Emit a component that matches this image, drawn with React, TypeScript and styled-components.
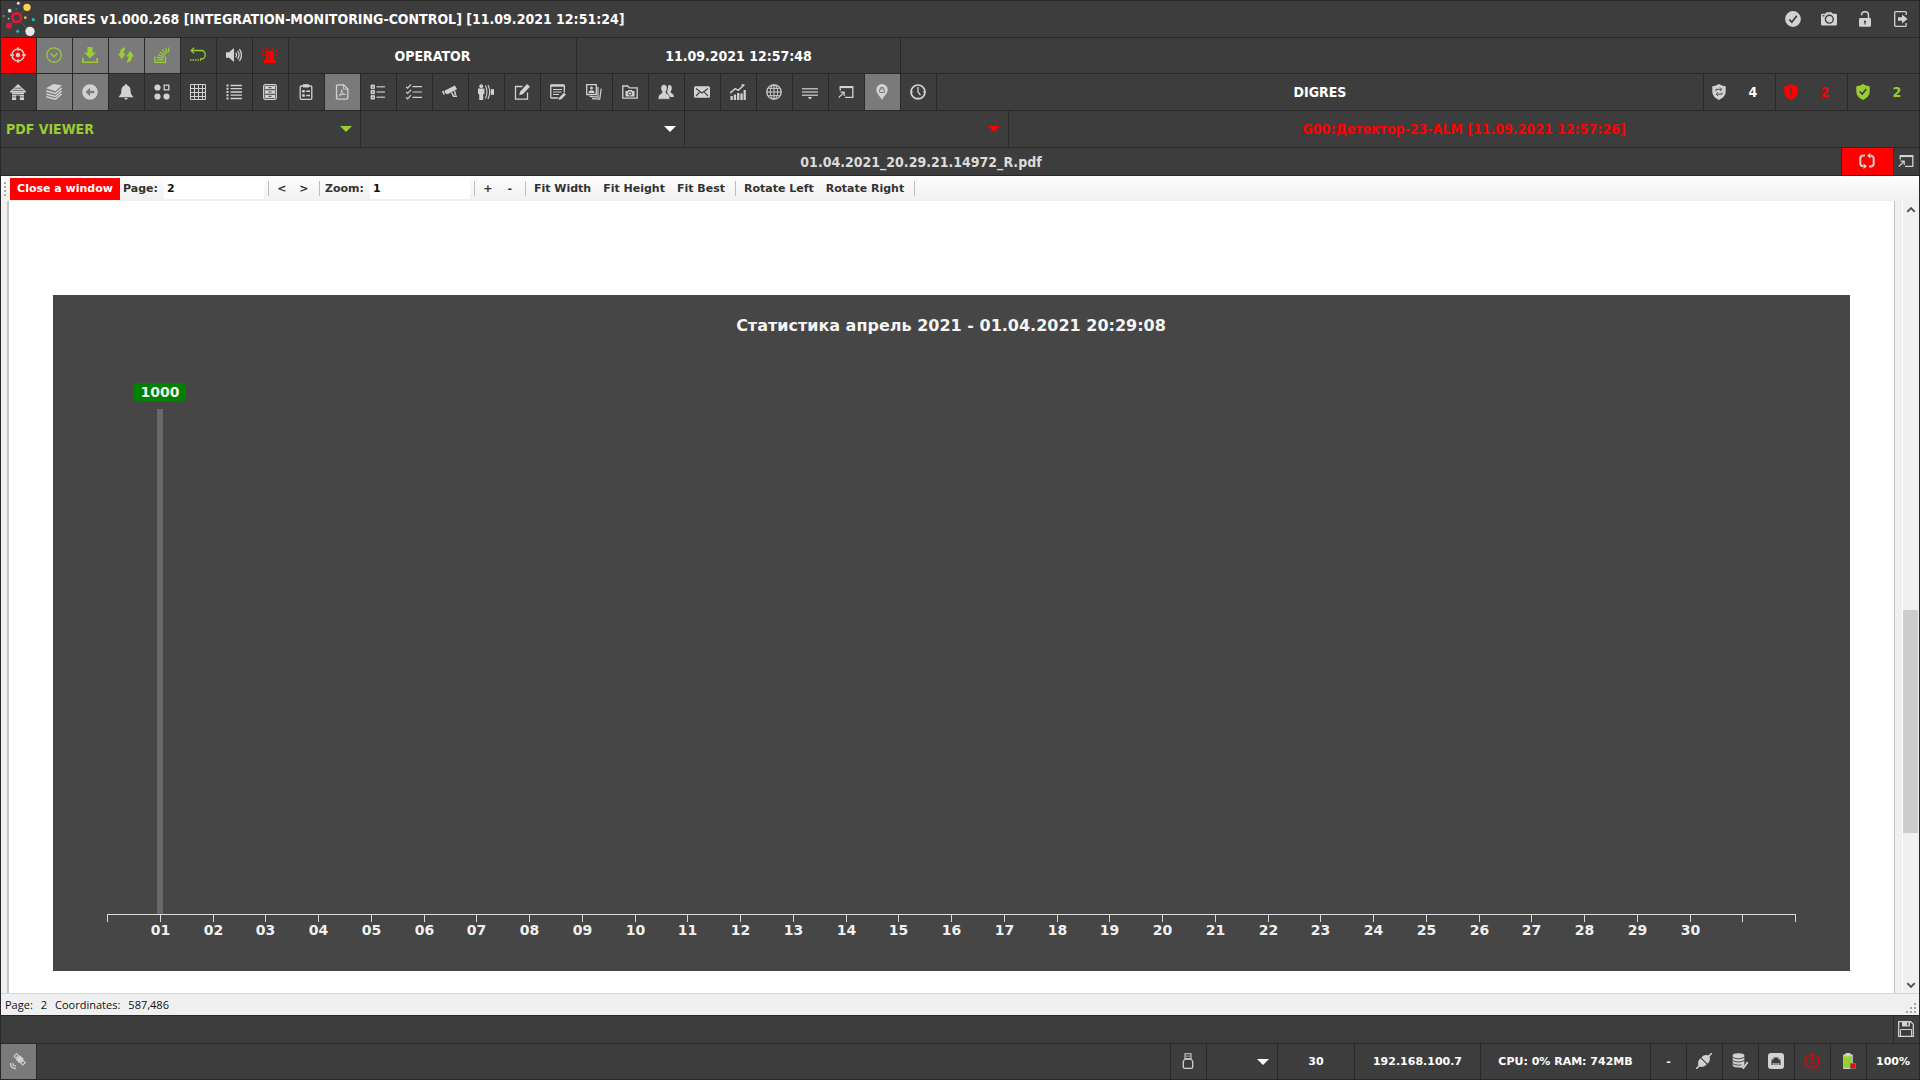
import React from "react";
import styled, { createGlobalStyle } from "styled-components";

const c = {
  panel: "#3d3d3d",
  line: "#282828",
  active: "#7a7a7a",
  icon: "#d2d2d2",
  green: "#9acd32",
  red: "#ff0000",
  light: "#f0f0f0",
};

const Global = createGlobalStyle`
  *, *::before, *::after { box-sizing: border-box; }
  body { margin: 0; background: ${c.line}; overflow: hidden; }
  button, input, select { font: inherit; color: inherit; border: 0; padding: 0; margin: 0; background: none; border-radius: 0; }
`;

const Shell = styled.div`
  display: flex;
  flex-direction: column;
  gap: 1px;
  min-height: 100vh;
  padding: 1px;
  background: ${c.line};
  color: #fff;
  font: bold 14px "DejaVu Sans Condensed", "DejaVu Sans", sans-serif;
`;

const TitleBar = styled.header`
  display: flex;
  align-items: center;
  height: 36px;
  flex: none;
  background: ${c.panel};
`;

const AppTitle = styled.h1`
  flex: 1;
  margin: 0 0 0 6px;
  font: inherit;
`;

const IconButton = styled.button<{ $bg?: string; $tone?: string; $w?: number }>`
  display: flex;
  align-items: center;
  justify-content: center;
  flex: none;
  width: ${(p) => p.$w ?? 35}px;
  padding-right: 1px;
  align-self: stretch;
  background: ${(p) => p.$bg ?? c.panel};
  color: ${(p) => p.$tone ?? c.icon};
`;

const Row = styled.div<{ $h: number }>`
  display: flex;
  gap: 1px;
  height: ${(p) => p.$h}px;
  flex: none;
  ${IconButton} {
    padding-bottom: ${(p) => p.$h % 2}px;
  }
`;

const BottomBar = styled(Row)`
  font: bold 11px "DejaVu Sans", sans-serif;
`;

const Cell = styled.div<{ $w?: number; $tone?: string }>`
  display: flex;
  align-items: center;
  justify-content: center;
  ${(p) => (p.$w ? `width: ${p.$w}px; flex: none;` : "flex: 1;")}
  background: ${c.panel};
  color: ${(p) => p.$tone ?? "#fff"};
  white-space: nowrap;
`;

const Counter = styled.div<{ $tone?: string }>`
  display: flex;
  align-items: center;
  gap: 4px;
  flex: none;
  width: 71px;
  padding-left: 7px;
  background: ${c.panel};
  color: ${(p) => p.$tone ?? "#fff"};
`;

const CounterValue = styled.span`
  flex: 1;
  text-align: center;
`;

const PickerBox = styled.div<{ $w: number; $tone: string }>`
  position: relative;
  flex: none;
  width: ${(p) => p.$w}px;
  background: ${c.panel};
  color: ${(p) => p.$tone};
  &::after {
    content: "";
    position: absolute;
    right: 8px;
    top: 50%;
    margin-top: -3px;
    border: 6px solid transparent;
    border-top-color: currentColor;
    border-bottom: 0;
    pointer-events: none;
  }
`;

const PickerSelect = styled.select`
  appearance: none;
  width: 100%;
  height: 100%;
  padding-left: 5px;
  option { color: #000; }
`;

const Viewer = styled.main`
  display: flex;
  flex-direction: column;
  flex: 1;
  min-height: 0;
  background: ${c.light};
  color: #333;
`;

const Toolbar = styled.div`
  display: flex;
  align-items: center;
  height: 25px;
  flex: none;
  padding-left: 3px;
  background: linear-gradient(#fefefe, ${c.light});
  font: bold 11px "DejaVu Sans", sans-serif;
`;

const Grip = styled.span`
  width: 2px;
  height: 14px;
  margin-right: 4px;
  background: repeating-linear-gradient(#aaa 0 2px, transparent 2px 4px);
`;

const CloseButton = styled.button`
  width: 110px;
  height: 22px;
  background: ${c.red};
  color: #fff;
`;

const FieldLabel = styled.label`
  margin: 0 6px 0 3px;
`;

const Field = styled.input`
  width: 100px;
  height: 20px;
  padding: 0 3px;
  background: #fff;
  color: #111;
`;

const ToolButton = styled.button<{ $w?: number }>`
  ${(p) => (p.$w ? `width: ${p.$w}px;` : "padding: 0 6px;")}
  height: 22px;
  white-space: nowrap;
`;

const Divider = styled.span`
  width: 1px;
  height: 15px;
  margin: 0 2px 0 4px;
  background: #bdbdbd;
`;

const Viewport = styled.div`
  display: flex;
  flex: 1;
  min-height: 0;
  overflow: hidden;
`;

const PageArea = styled.section`
  flex: 1;
  min-width: 0;
  margin: 0 8px 0 6px;
  padding: 94px 44px 22px;
  border: solid #c4c4c4;
  border-width: 0 1px 0 2px;
  background: #fff;
`;

const Chart = styled.svg`
  display: block;
  width: 100%;
  height: auto;
  background: #464646;
  font: bold 14px "DejaVu Sans", sans-serif;
`;

const ScrollRail = styled.div`
  display: flex;
  flex-direction: column;
  width: 17px;
  margin-left: -1px;
  flex: none;
  border-left: 1px solid #fff;
`;

const ScrollButton = styled.button`
  display: flex;
  align-items: center;
  justify-content: center;
  height: 17px;
  flex: none;
  padding-right: 1px;
  color: #505050;
`;

const ScrollTrack = styled.div`
  display: flex;
  flex-direction: column;
  flex: 1;
  padding-right: 1px;
`;

const ScrollSpace = styled.span<{ $grow: number }>`
  flex: ${(p) => p.$grow} 0 0;
`;

const ScrollThumb = styled.span`
  flex: 223 0 0;
  background: #cdcdcd;
`;

const StatusLine = styled.div`
  display: flex;
  align-items: center;
  gap: 8px;
  height: 22px;
  flex: none;
  padding-left: 4px;
  border-top: 1px solid #d7d7d7;
  color: #111;
  font: 11px "Open Sans", sans-serif;
`;

const SizeGrip = styled.span`
  display: flex;
  margin: 6px 3px 0 auto;
`;

type Glyph = React.ReactNode;

const Icon = ({ size = 16, children }: { size?: number; children: Glyph }) => (
  <svg width={size} height={size} viewBox="0 0 16 16" fill="none" stroke="currentColor" strokeWidth="1.3" aria-hidden="true">
    {children}
  </svg>
);

const F = { fill: "currentColor", stroke: "none" };
const cut = { fill: "none", stroke: c.panel };
const cutFill = { fill: c.panel, stroke: "none" };

const shield = "M8 0C9.800 1.300 12 2 14.700 2.300V7.500c0 4-3.200 7-6.700 8.500C4.500 14.500 1.300 11.500 1.300 7.500V2.300C4 2 6.200 1.300 8 0z";

const g: Record<string, Glyph> = {
  target: <><circle cx="8" cy="8" r="6" strokeWidth="1.5" /><circle cx="8" cy="8" r="2.200" {...F} /><path d="M8 0v4M8 12v4M0 8h4M12 8h4" /></>,
  chevron: <><circle cx="8" cy="8" r="7.200" /><path d="M4.500 6.300 8 9.800l3.500-3.500" /></>,
  download: <><path d="M5.500 0h5v5.500H14L8 11.500 2 5.500h3.500z" {...F} /><path d="M.8 11v4.200h14.400V11" strokeWidth="1.600" /></>,
  bolts: <><path d="M7.500 0 3 2.200 1.800 6.500H0l3.700 5.700L7.800 6.500H5.300z" {...F} /><path d="M8.500 16l4.500-2.200 1.200-4.300H16l-3.700-5.700-4.100 5.700h2.500z" {...F} /></>,
  stack: <><path d="M1 9.500v5.800h10.500V9.500" /><path d="M3 12.900h6.500M3.100 10.300l6.400.9M4 7.600l6 2.200M5.800 4.900l5 3.600M8.400 2.700l3.500 4.600M11.600 1.200l1.400 5M15 .5l-.7 5" strokeWidth="1.200" /></>,
  back: <><path d="M1 3.500h10.500a3.700 4.200 0 0 1 0 8.500H10" /><path d="M4.200.6 1.200 3.500l3 2.900" /><path d="M0 13h11" strokeDasharray="1.500 1" strokeWidth="1.400" /></>,
  sound: <><path d="M0 5.300h3L8 1v14L3 10.700H0z" {...F} /><path d="M9.700 5.700q1.600 2.300 0 4.600M11.600 3.900q3 4.100 0 8.200M13.400 2.200q4.200 5.800 0 11.600" /></>,
  siren: <><path d="M4 13V6q0-2.500 2.500-2.500h3Q12 3.500 12 6v7h2v3H2v-3z" {...F} /><path d="M6.300 12V7.500q0-1.500 1-1.800" stroke={c.panel} strokeWidth=".8" /><path d="M5.200 2.300 4.300.2M10.800 2.300 11.700.2M2.700 4.500.8 3M13.300 4.500l2-1.500M2.500 7.500H0M13.500 7.500H16" /></>,
  home: <><path d="M8 0 0 7.500v1h16v-1z" {...F} /><path d="M2 8.500h12V16H9.800v-4.500H6.200V16H2z" {...F} /><path d="M4.500 4.200h7M2.500 6.400h11M2 10.600h12M2 13h12" stroke={c.panel} strokeWidth=".7" /></>,
  layers: <><path d="M0 4.300 7.500 0 16 1.300 9.500 7.300z" {...F} /><path d="M.3 7 9.500 9.500 15.700 4M.3 10 9.500 12.500 15.700 7M.3 12.800 9.500 15.200 15.700 9.800" strokeWidth="1.500" /></>,
  prev: <><circle cx="8" cy="8" r="7.800" {...F} /><path d="M12.300 6.700H8V3.800L3.500 8 8 12.200V9.300h4.300z" fill={c.active} stroke="none" /></>,
  bell: <><path d="M8 0q1.300 0 1.300 1.500C12.500 2.400 12.500 5 12.700 8c.2 2 1.300 3.300 2.800 5.200H.5C2 11.300 3.100 10 3.300 8c.2-3 .2-5.600 3.400-6.500Q6.700 0 8 0z" {...F} /><path d="M6 14h4q-2 3.500-4 0z" {...F} /></>,
  shapes: <><circle cx="3.500" cy="3.500" r="3.100" {...F} /><circle cx="3.500" cy="12.500" r="3.100" {...F} /><circle cx="12.500" cy="12.500" r="3.100" {...F} /><path d="M10.200 1.200h4.600v4.600h-4.600z" /></>,
  grid: <path d="M.5.5h15v15H.5zM4.500.5v15M8.500.5v15M12.500.5v15M.5 4.500h15M.5 8.500h15M.5 12.500h15" strokeWidth="1" />,
  list: <><path d="M4.500 1.500H16M4.500 4.700H16M4.500 8H16M4.500 11.200H16M4.500 14.500H16" /><path d="M.5 1.500h2M.5 4.700h2M.5 8h2M.5 11.200h2M.5 14.500h2" strokeWidth="2" /></>,
  cabinet: <><rect x="1.700" y=".7" width="12.600" height="14.600" rx="1.500" /><path d="M3 2h10v3.300H3zM3 6.300h10v3.400H3zM3 10.700h10V14H3z" {...F} /><path d="M6.500 3.700h3M6.500 8h3M6.500 12.300h3" {...cut} strokeWidth="1" /></>,
  clipboard: <><rect x="2.200" y="2" width="11.600" height="13.300" rx="1" /><path d="M5 .2h6v3.300H5z" {...F} /><path d="M4.200 6h2.600v2.600H4.200zM4.200 10.200h2.600v2.600H4.200zM8.200 6.500H12v1.400H8.200zM8.200 10.800H12v1.400H8.200z" {...F} /></>,
  pdf: <><path d="M2.500 2.200Q2.500.8 4 .8h5.500l4.300 4.300v8.700q0 1.400-1.500 1.400H4q-1.500 0-1.500-1.400z" /><path d="M9.500.8v4.300h4.300" strokeWidth=".9" /><path d="M7.700 5.500c.6 2-1 5-3.200 7M7.700 6.500c.3 2.500 2 4 4 4.200M5.500 11.300q2.500-1.300 5.500-1" strokeWidth="1" /></>,
  boxes: <><path d="M1 1h3.500v3.500H1zM1 6.300h3.500v3.500H1zM1 11.600h3.500v3.500H1z" fill="currentColor" strokeWidth=".8" /><path d="M2 3h1.500M2 8h1.500M2 13.300h1.500" stroke={c.panel} strokeWidth=".9" /><path d="M6.500 2.700H15M6.500 8H15M6.500 13.300H15" opacity=".75" strokeWidth="1.600" /></>,
  checks: <path d="M6.500 2.700H16M6.500 8H16M6.500 13.300H16M0 2.700l1.600 1.500L5 .5M0 8l1.600 1.500L5 5.800M0 13.300l1.600 1.500L5 11.100" strokeWidth="1.200" />,
  cctv: <><path d="M2.500 6.700 12.800 1.500 15 5.200 5.500 10.200 3.300 9.200z" {...F} /><path d="M.7 7l1.600 3.500" strokeWidth="1.600" /><path d="M9.500 8.500l2 3.700H15M12.500 7l1 4" strokeWidth="1.500" /></>,
  sensor: <><circle cx="3.200" cy="2.200" r="1.900" {...F} /><path d="M0 4.500h6.400V10H5.200v6h-4v-6H0z" {...F} /><path d="M7.500 1.500q2.800 6.500 0 13M10 1q3.400 7 0 14" strokeWidth="1.100" /><path d="M12.800 5.200H16v5.600h-3.200z" {...F} /></>,
  edit: <><path d="M8.500 2.500h-7v12.700h12V8.500" /><path d="M13 0l3 2.700-7.200 7.500-3.600 1 .8-3.500z" {...F} /></>,
  note: <><path d="M8.500 14H1.500q-.7 0-.7-.8V1.500q0-.7.7-.7h12q.8 0 .8.700v7" /><path d="M1 1.800h13" strokeWidth="1.800" /><path d="M3 5.500h9M3 8h8.500M3 10.500h6" strokeWidth="1.200" /><path d="M13.900 8.700l2.100 1.800-4.700 4.700-2.600.8.600-2.600z" {...F} /></>,
  photos: <><path d="M.7.7h9.600v9.800H.7z" /><circle cx="5.500" cy="4" r="1.500" {...F} /><path d="M2.500 9q0-2.800 3-2.800t3 2.800z" {...F} /><path d="M3.500 12.400l8.500.8V3M6 14.600l7.700.6 1.500-10.500" strokeWidth="1.200" /></>,
  folder: <><path d="M.8 14.200V2h5l1.400 1.800h8v10.400z" /><path d="M3.500 7h2l.7-1h3.600l.7 1h2v5.500h-9z" {...F} /><circle cx="8" cy="9.500" r="1.700" {...cut} strokeWidth="1" /></>,
  users: <><path d="M10.500 1q3.500-.5 3.300 3.500-.2 2-1.300 3.200 0 1.200 1.500 1.700 2 .7 2 3.600h-4.500L9 8z" {...F} /><path d="M6 .5q3.300 0 3.200 3.700Q9 6.300 7.800 7.800q0 1.500 1.700 2.200 2.500 1 2.500 5.200H0Q0 11 2.500 10q1.700-.7 1.700-2.200Q3 6.300 2.800 4.200 2.700.5 6 .5z" fill="currentColor" stroke={c.panel} strokeWidth=".6" /></>,
  mail: <><rect y="2.200" width="16" height="11.600" rx="1.500" {...F} /><path d="M2 4.500 8 9l6-4.500M2 12l3.700-3.800M14 12l-3.700-3.800" {...cut} strokeWidth="1.100" /></>,
  stats: <><path d="M.5 12h2.300v4H.5zM3.800 10.500h2.300V16H3.800zM7.100 9h2.300v7H7.100zM10.400 9.500h2.300V16h-2.300zM13.600 6h2.200v10h-2.200z" {...F} /><path d="M.5 8.800 5.200 4.700l3 1.600 5.500-5M11.500 1h3M.5 7.700v1.800" strokeWidth="1.500" /></>,
  globe: <><circle cx="8" cy="8" r="7.200" /><path d="M8 1v14M1 8h14M2.300 4.300h11.400M2.300 11.700h11.400" strokeWidth="1" /><ellipse cx="8" cy="8" rx="3.700" ry="7" strokeWidth="1" /></>,
  lines: <><path d="M0 4.700h16M0 8h16M0 11.200h16" strokeWidth="1.400" opacity=".8" /><path d="M5.800 13h4.400L8 15.500z" {...F} /></>,
  popout: <><path d="M2.200 6.500V2.700h12.600v10.600H7" /><path d="M2.200 3.200h12.600" strokeWidth="1.800" /><path d="M.8 13.500 5.500 8.800M2.500 8.200h3.700v3.700" strokeWidth="1.200" /></>,
  pin: <><path d="M8 0a5.700 5.700 0 0 1 5.700 5.700C13.700 9 10 12 8 16 6 12 2.300 9 2.300 5.700A5.700 5.700 0 0 1 8 0z" {...F} /><path d="M5.700 5h4.600v3.500H5.700zM6.700 5V3.500h2.600V5" stroke={c.active} strokeWidth="1" /></>,
  clock: <><circle cx="8" cy="8" r="7" strokeWidth="1.700" /><path d="M8 3v5l2.500 3.200" /><path d="M1 8h2M13 8h2M8 13v2" strokeWidth="1" /></>,
  ok: <><circle cx="8" cy="8" r="7.900" {...F} /><path d="M4.300 8.500l2.500 2.700 5-6.500" {...cut} strokeWidth="1.800" /></>,
  camera: <><path d="M0 4q0-1.300 1.300-1.300h3L5.500 1.200h5l1.200 1.500h3Q16 2.700 16 4v9.300q0 1.300-1.300 1.300H1.300Q0 14.600 0 13.300z" {...F} /><circle cx="8.300" cy="8.200" r="3.900" {...cut} strokeWidth="1.400" /><path d="M1.500 4.800h2" {...cut} /></>,
  unlock: <><rect x="2" y="7" width="12" height="8.800" rx="1.200" {...F} /><path d="M4.500 4.300q0-3.600 3.500-3.600t3.500 3.600v3" strokeWidth="1.500" /><circle cx="8" cy="10.500" r="1.100" {...cutFill} /><path d="M8 10.500v3" {...cut} strokeWidth="1.100" /></>,
  exit: <><path d="M13.200 4V1.500q0-.8-.8-.8H2.500q-.8 0-.8.800v13q0 .8.800.8h9.900q.8 0 .8-.8V12" /><path d="M5 6.200h4V3.500L14.500 8 9 12.500V9.800H5z" {...F} /></>,
  shieldSync: <><path d={shield} fill={c.icon} stroke="none" /><path d="M5 7.200V5.300h5M9 3.500l1.800 1.800L9 7.100M11 8.300v1.900H6M7 8.400l-1.800 1.800L7 12" {...cut} strokeWidth=".9" /></>,
  shieldAlert: <><path d={shield} {...F} /><path d="M8 4v5M8 10.500v1.700" {...cut} strokeWidth="1.500" /></>,
  shieldOk: <><path d={shield} {...F} /><path d="M4.700 7.500l2.600 2.600 4-5" {...cut} strokeWidth="1.600" /></>,
  sync: <><path d="M6 2.500H4.500Q1.300 2.500 1.300 5.500v5q0 2.500 3 2.800M10 13.500h1.500q3.200 0 3.200-3v-5q0-2.500-3-2.800" strokeWidth="2" /><path d="M11.500 0v5.500L8 2.700zM4.500 10.500V16L8 13.300z" {...F} /></>,
  save: <><path d="M.7.700h12l2.600 2.600v12H.7z" /><path d="M4 .7h8v4.800H4z" {...F} /><path d="M9.800 1.500v3" {...cut} /><path d="M2.500 15V8.500h11V15" strokeWidth="1" /></>,
  satellite: <><path d="M10 2.200 13.800 6 9.500 10.300 5.700 6.500z" {...F} /><path d="M6.500.7 8.500 2.700 6 5.200 4 3.200zM13 7.500l2.300 2.200-2.500 2.300-2.200-2.200z" strokeWidth="1.100" /><path d="M.5 10q0 5.500 5.500 5.500M2.800 10q0 3.200 3.200 3.200" strokeWidth="1.200" /></>,
  usb: <><path d="M5 .7h6v5H5z" strokeWidth="1.100" /><path d="M6.300 3.200h1.300M8.500 3.200h1.300" strokeWidth="1.300" /><path d="M5.500 6h5q2.200.8 2.200 3v4.700q0 1.600-1.700 1.600H5q-1.700 0-1.700-1.600V9q0-2.200 2.200-3z" /></>,
  plug: <><path d="M16 0l-3.500 3.500M0 16l3.500-3.500" strokeWidth="1.500" /><path d="M5.300 4.500Q8.500.8 13.300 2.700 15.200 7.500 11.500 10.700zM4.500 5.300 10.700 11.500Q7.500 15.200 2.700 13.300.8 8.500 4.500 5.300z" {...F} /></>,
  db: <><path d="M.7 2.500Q.7.300 6.500.3t5.800 2.200v9.800L10 14.500H6.500Q.7 14.500.7 12z" {...F} /><path d="M.5 4q2 1.800 6 1.800T12.500 4M.5 7.200Q2.500 9 6.500 9t6-1.800M.5 10.400q2 1.800 6 1.800t3.500-.8" {...cut} strokeWidth=".9" /><path d="M9 12.300l2.500 2.700L15.800 9" strokeWidth="1.800" /></>,
  ethernet: <><rect width="16" height="16" rx="3" {...F} /><path d="M3.500 12V6.500h2v-2h5v2h2V12z" {...cutFill} /><path d="M5.300 12v-2M7.100 12v-2M8.900 12v-2M10.700 12v-2" strokeWidth="1" /></>,
  timer: <><path d="M12.300 3.200A6.600 6.600 0 1 1 5 2.400" strokeWidth="1.500" /><path d="M5 2.200h4M8.800 4.800 7.500 8.300l2.800 2.200" strokeWidth="1.500" /><path d="M7.500 0l3.500 2.200L7.500 4.400z" {...F} /></>,
  battery: <><path d="M5.500 0h5v1.500h2.300V16H3.200V1.500h2.300z" {...F} /><path d="M4 3.300h8V15H4z" fill={c.green} stroke="none" /><path d="M10.500 10.500h5v5h-5z" fill={c.red} stroke="#707070" strokeWidth=".9" /></>,
};

const Logo = () => (
  <svg width="36" height="36" viewBox="3 3 108 108" aria-hidden="true">
    <path d="M50 53 81 22M50 53 90 94M50 53 27 77M50 53 29 32" stroke="#3c6664" strokeWidth="3" />
    <circle cx="50" cy="53" r="13" fill={c.panel} stroke="#e01735" strokeWidth="8" />
    <circle cx="81" cy="22" r="11" fill="#ffd152" />
    <circle cx="90" cy="94" r="14" fill="#e8e8e8" />
    <circle cx="27" cy="77" r="9" fill="#e01735" />
    <circle cx="29" cy="32" r="5.500" fill="#e8e8e8" />
    <circle cx="55" cy="10" r="4.500" fill="#dcdcdc" />
    <circle cx="100" cy="59" r="5" fill="#2bb6c0" />
    <circle cx="53" cy="94" r="4.500" fill="#2bb6c0" />
    <circle cx="49" cy="27" r="3" fill="#277d83" />
    <circle cx="76" cy="53" r="4" fill="#f0c24c" />
    <circle cx="11" cy="48" r="3" fill="#a18a48" />
    <circle cx="26" cy="56" r="2.500" fill="#bbb" />
  </svg>
);

type Tool = { icon: string; label: string; bg?: string; tone?: string };

const quick: Tool[] = [
  { icon: "target", label: "Target", bg: c.red },
  { icon: "chevron", label: "Expand", bg: c.active, tone: c.green },
  { icon: "download", label: "Download", bg: c.active, tone: c.green },
  { icon: "bolts", label: "Power events", bg: c.active, tone: c.green },
  { icon: "stack", label: "Stack", bg: c.active, tone: c.green },
  { icon: "back", label: "Return", tone: c.green },
  { icon: "sound", label: "Sound" },
  { icon: "siren", label: "Alarm", tone: c.red },
];

const activeTools = ["layers", "prev", "pdf", "pin"];
const tools = [
  "home", "layers", "prev", "bell", "shapes", "grid", "list", "cabinet", "clipboard", "pdf", "boxes", "checks", "cctv",
  "sensor", "edit", "note", "photos", "folder", "users", "mail", "stats", "globe", "lines", "popout", "pin", "clock",
];

const ToolIcon = ({ icon, label, bg, tone }: Tool) => (
  <IconButton type="button" aria-label={label} $bg={bg} $tone={tone}>
    <Icon>{g[icon]}</Icon>
  </IconButton>
);

const Picker = ({ w, tone, label, value = "" }: { w: number; tone: string; label: string; value?: string }) => (
  <PickerBox $w={w} $tone={tone}>
    <PickerSelect aria-label={label}>
      <option>{value}</option>
    </PickerSelect>
  </PickerBox>
);

const axis = { left: 54, right: 1742, y: 619, steps: 32 };
const tickX = (i: number) => Math.round(axis.left + ((axis.right - axis.left) * i) / axis.steps) + 0.5;
const days = Array.from({ length: 30 }, (_, i) => i + 1);

const StatsChart = () => (
  <Chart viewBox="0 0 1797 676" role="img" aria-label="Статистика">
    <text x="898" y="36" fontSize="16" fill="#f5f5f5" textAnchor="middle">
      Статистика апрель 2021 - 01.04.2021 20:29:08
    </text>
    <rect x="104" y="114" width="6" height="505" fill="#696969" />
    <rect x="80" y="88" width="53" height="18" fill="#008000" />
    <text x="107" y="102" fill="#eee" textAnchor="middle">1000</text>
    <path d={`M${tickX(0)} ${axis.y}.5H${tickX(axis.steps)}`} stroke="#dcdcdc" />
    {Array.from({ length: axis.steps + 1 }, (_, i) => (
      <path key={i} d={`M${tickX(i)} ${axis.y}v8`} stroke="#dcdcdc" />
    ))}
    {days.map((d) => (
      <text key={d} x={tickX(d)} y="640" fill="#f0f0f0" textAnchor="middle">
        {String(d).padStart(2, "0")}
      </text>
    ))}
  </Chart>
);

export default function App() {
  return (
    <Shell>
      <Global />
      <TitleBar>
        <Logo />
        <AppTitle>DIGRES v1.000.268 [INTEGRATION-MONITORING-CONTROL] [11.09.2021 12:51:24]</AppTitle>
        {["ok", "camera", "unlock", "exit"].map((n) => (
          <IconButton key={n} type="button" aria-label={n} $w={36}><Icon>{g[n]}</Icon></IconButton>
        ))}
      </TitleBar>

      <Row $h={35}>
        {quick.map((t) => <ToolIcon key={t.icon} {...t} />)}
        <Cell $w={287}>OPERATOR</Cell>
        <Cell $w={323}>11.09.2021 12:57:48</Cell>
        <Cell />
      </Row>

      <Row $h={36} as="nav">
        {tools.map((n) => (
          <ToolIcon key={n} icon={n} label={n} bg={activeTools.includes(n) ? c.active : undefined} />
        ))}
        <Cell>DIGRES</Cell>
        <Counter><Icon>{g.shieldSync}</Icon><CounterValue>4</CounterValue></Counter>
        <Counter $tone={c.red}><Icon>{g.shieldAlert}</Icon><CounterValue>2</CounterValue></Counter>
        <Counter $tone={c.green}><Icon>{g.shieldOk}</Icon><CounterValue>2</CounterValue></Counter>
      </Row>

      <Row $h={36}>
        <Picker w={359} tone={c.green} label="Module" value="PDF VIEWER" />
        <Picker w={323} tone="#fff" label="Group" />
        <Picker w={323} tone={c.red} label="Alarm group" />
        <Cell $tone={c.red}>G00:Детектор-23-ALM [11.09.2021 12:57:26]</Cell>
      </Row>

      <Row $h={27}>
        <Cell $tone="#dcdcdc">01.04.2021_20.29.21.14972_R.pdf</Cell>
        <IconButton type="button" aria-label="Refresh" $w={51} $bg={c.red}><Icon>{g.sync}</Icon></IconButton>
        <IconButton type="button" aria-label="Open in window" $w={25}><Icon>{g.popout}</Icon></IconButton>
      </Row>

      <Viewer>
        <Toolbar role="toolbar">
          <Grip />
          <CloseButton type="button">Close a window</CloseButton>
          <FieldLabel htmlFor="page">Page:</FieldLabel>
          <Field id="page" defaultValue="2" />
          <Divider />
          <ToolButton type="button" $w={22}>&lt;</ToolButton>
          <ToolButton type="button" $w={22}>&gt;</ToolButton>
          <Divider />
          <FieldLabel htmlFor="zoom">Zoom:</FieldLabel>
          <Field id="zoom" defaultValue="1" />
          <Divider />
          <ToolButton type="button" $w={22}>+</ToolButton>
          <ToolButton type="button" $w={22}>-</ToolButton>
          <Divider />
          <ToolButton type="button">Fit Width</ToolButton>
          <ToolButton type="button">Fit Height</ToolButton>
          <ToolButton type="button">Fit Best</ToolButton>
          <Divider />
          <ToolButton type="button">Rotate Left</ToolButton>
          <ToolButton type="button">Rotate Right</ToolButton>
          <Divider />
        </Toolbar>
        <Viewport>
          <PageArea><StatsChart /></PageArea>
          <ScrollRail>
            <ScrollButton type="button" aria-label="Scroll up">
              <Icon size={10}><path d="M2 11l6-6 6 6" strokeWidth="3" /></Icon>
            </ScrollButton>
            <ScrollTrack><ScrollSpace $grow={392} /><ScrollThumb /><ScrollSpace $grow={143} /></ScrollTrack>
            <ScrollButton type="button" aria-label="Scroll down">
              <Icon size={10}><path d="M2 5l6 6 6-6" strokeWidth="3" /></Icon>
            </ScrollButton>
          </ScrollRail>
        </Viewport>
        <StatusLine>
          <span>Page:</span><span>2</span><span>Coordinates:</span><span>587,486</span>
          <SizeGrip>
            <svg width="10" height="10" fill="#a5a5a5" aria-hidden="true">
              <path d="M8 0h2v2H8zM4 4h2v2H4zM8 4h2v2H8zM0 8h2v2H0zM4 8h2v2H4zM8 8h2v2H8z" />
            </svg>
          </SizeGrip>
        </StatusLine>
      </Viewer>

      <Row $h={27}>
        <Cell />
        <IconButton type="button" aria-label="Save" $w={25}><Icon>{g.save}</Icon></IconButton>
      </Row>

      <BottomBar $h={35} as="footer">
        <IconButton type="button" aria-label="Satellite" $bg={c.active}><Icon>{g.satellite}</Icon></IconButton>
        <Cell />
        <IconButton type="button" aria-label="USB"><Icon>{g.usb}</Icon></IconButton>
        <Picker w={70} tone="#fff" label="Drive" />
        <Cell $w={76}>30</Cell>
        <Cell $w={125}>192.168.100.7</Cell>
        <Cell $w={169}>CPU: 0% RAM: 742MB</Cell>
        <Cell $w={35}>-</Cell>
        <IconButton type="button" aria-label="Connection"><Icon>{g.plug}</Icon></IconButton>
        <IconButton type="button" aria-label="Database"><Icon>{g.db}</Icon></IconButton>
        <IconButton type="button" aria-label="Network"><Icon>{g.ethernet}</Icon></IconButton>
        <IconButton type="button" aria-label="Timer" $tone="#e60000"><Icon>{g.timer}</Icon></IconButton>
        <IconButton type="button" aria-label="Battery"><Icon>{g.battery}</Icon></IconButton>
        <Cell $w={52}>100%</Cell>
      </BottomBar>
    </Shell>
  );
}
